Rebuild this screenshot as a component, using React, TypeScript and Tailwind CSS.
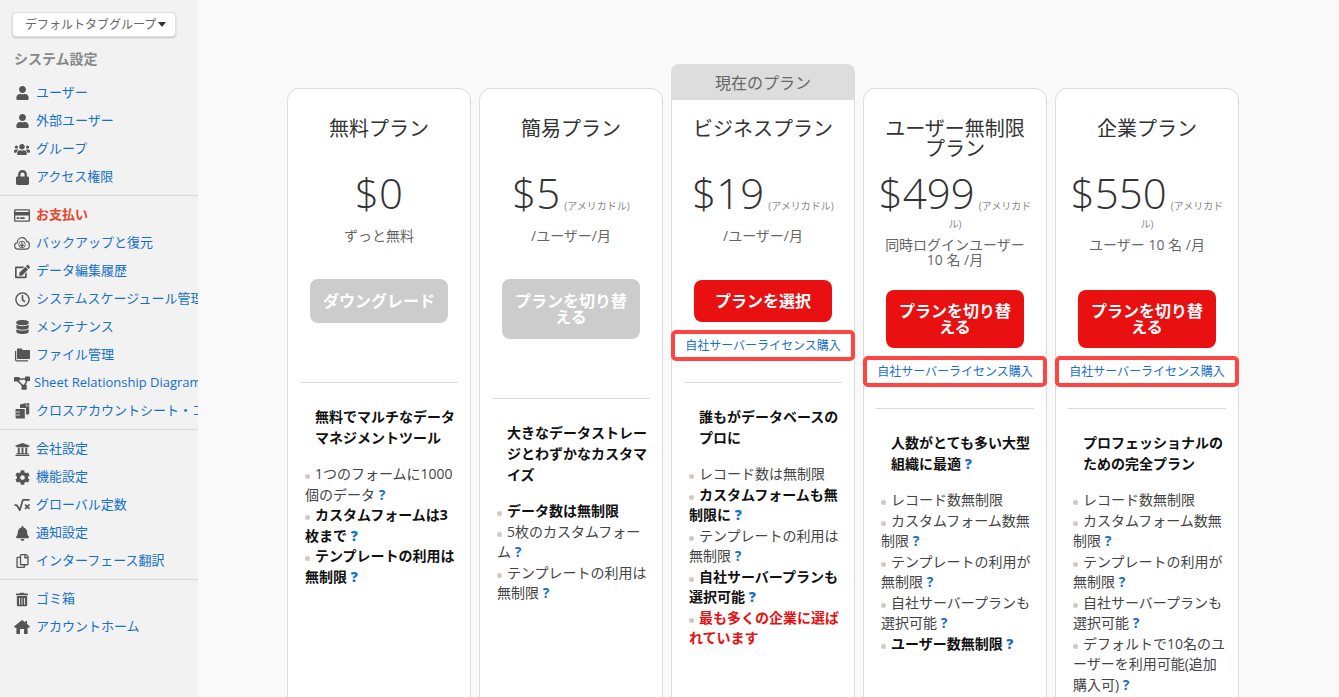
import React from "react";
import { FaUser, FaUsers, FaLock, FaRegCreditCard, FaRegClock, FaDatabase, FaUniversity, FaCog, FaBell, FaRegCopy, FaTrashAlt, FaEdit } from "react-icons/fa";
import { FaSquareRootVariable } from "react-icons/fa6";

const CloudIcon = () => (
  <svg viewBox="0 0 18 15" className="h-[15px] w-[18px]" fill="none" stroke="currentColor">
    <path d="M4.5 13.8 C2 13.8 0.7 12 0.7 10 C0.7 8.2 2 6.9 3.6 6.7 C3.8 3.4 6.2 0.9 9 0.9 C11.6 0.9 13.4 2.6 14 4.8 C15.9 5.2 17.3 7 17.3 9.2 C17.3 11.8 15.6 13.8 13.5 13.8 Z" strokeWidth="1.3" />
    <circle cx="9" cy="8.6" r="3.7" strokeWidth="1" />
    <path d="M9 6 V10.6 M7 8.8 L9 10.9 L11 8.8" strokeWidth="1.3" />
  </svg>
);
const FoldersIcon = () => (
  <svg viewBox="0 0 16 14" className="h-[14px] w-[16px]" fill="currentColor">
    <path d="M3 1.5 C3 .8 3.5 .5 4 .5 H7.5 L9 2 H15 C15.6 2 16 2.4 16 3 V10 C16 10.6 15.6 11 15 11 H4 C3.4 11 3 10.6 3 10 Z" />
    <path d="M1.6 3 V11.5 C1.6 12.3 2.2 12.8 3 12.8 H14" fill="none" stroke="currentColor" strokeWidth="1.3" />
  </svg>
);
const DiagramIcon = () => (
  <svg viewBox="0 0 16 14" className="h-[14px] w-[16px]" fill="currentColor">
    <rect x="0" y="1" width="5.5" height="4.5" rx=".6" />
    <rect x="11" y="0.5" width="5" height="4.5" rx=".6" />
    <rect x="7.5" y="8.8" width="5.2" height="5" rx=".6" />
    <path d="M5 3 H11 M4 5 L8.5 9.5 M13 4.5 L10.5 9.5" stroke="currentColor" strokeWidth="1.5" fill="none" />
  </svg>
);
const StackIcon = () => (
  <svg viewBox="0 0 15 16" className="h-[16px] w-[15px]" fill="currentColor">
    <path d="M5 1.6 L10 .2 L14.2 .2 V10.2 C14.2 11 13.6 11.6 12.8 11.6 H11 V5 L5 5 Z" />
    <path d="M11.2 .4 V3 H14" fill="none" stroke="#f2f2f2" strokeWidth=".7" />
    <path d="M.6 6 H9.8 V15.6 H2 C1.2 15.6 .6 15 .6 14.2 Z" />
    <path d="M1 9 H5 M1 12 H5" stroke="#f2f2f2" strokeWidth=".8" />
  </svg>
);
const HomeIcon = () => (
  <svg viewBox="0 0 16 14" className="h-[14px] w-[16px]" fill="currentColor">
    <path d="M8 0 L11.2 2.6 V1 H13 V4 L16 6.6 L15 7.8 H13.6 V14 H10 V9 H6 V14 H2.4 V7.8 H1 L0 6.6 Z" />
  </svg>
);

type Row = { icon: React.ReactNode; label: string; red?: boolean; tight?: boolean };
const ic = "w-[15px] h-[15px]";
const g1: Row[] = [
  { icon: <FaUser className="w-[13px] h-[14px]" />, label: "ユーザー" },
  { icon: <FaUser className="w-[13px] h-[14px]" />, label: "外部ユーザー" },
  { icon: <FaUsers className="w-[18px] h-[15px]" />, label: "グループ" },
  { icon: <FaLock className="w-[13px] h-[15px]" />, label: "アクセス権限" },
];
const g2: Row[] = [
  { icon: <FaRegCreditCard className="w-[16px] h-[15px]" />, label: "お支払い", red: true },
  { icon: <CloudIcon />, label: "バックアップと復元" },
  { icon: <FaEdit className={ic} />, label: "データ編集履歴" },
  { icon: <FaRegClock className={ic} />, label: "システムスケージュール管理" },
  { icon: <FaDatabase className="w-[13px] h-[14px]" />, label: "メンテナンス" },
  { icon: <FoldersIcon />, label: "ファイル管理" },
  { icon: <DiagramIcon />, label: "Sheet Relationship Diagram", tight: true },
  { icon: <StackIcon />, label: "クロスアカウントシート・コピー" },
];
const g3: Row[] = [
  { icon: <FaUniversity className={ic} />, label: "会社設定" },
  { icon: <FaCog className={ic} />, label: "機能設定" },
  { icon: <FaSquareRootVariable className="w-[16px] h-[14px]" />, label: "グローバル定数" },
  { icon: <FaBell className="w-[13px] h-[15px]" />, label: "通知設定" },
  { icon: <FaRegCopy className="w-[13px] h-[14px]" />, label: "インターフェース翻訳" },
];
const g4: Row[] = [
  { icon: <FaTrashAlt className="w-[12px] h-[15px]" />, label: "ゴミ箱" },
  { icon: <HomeIcon />, label: "アカウントホーム" },
];

function Rows({ rows }: { rows: Row[] }) {
  return (
    <>
      {rows.map((r) => (
        <div key={r.label} className="flex h-7 items-center whitespace-nowrap">
          <span className="flex w-[36px] shrink-0 justify-center pl-[14px] pr-[6px] text-[#555]">{r.icon}</span>
          <span className={`text-[13px] ${r.tight ? "-ml-[2px]" : ""} ${r.red ? "font-bold text-[#e8432d]" : "text-[#1570c8]"}`}>{r.label}</span>
        </div>
      ))}
    </>
  );
}

type Feat = { lines: string[]; kind?: "b" | "r"; q?: boolean };
type Plan = {
  name: string[];
  price: string;
  unit?: string;
  wrap?: string;
  sub: string[];
  btn: string[];
  active: boolean;
  license: boolean;
  current?: boolean;
  head: React.ReactNode;
  feats: Feat[];
};
const Q = () => <b className="text-[#1570c8]"> ?</b>;

const plans: Plan[] = [
  {
    name: ["無料プラン"], price: "$0", sub: ["ずっと無料"], btn: ["ダウングレード"], active: false, license: false,
    head: <>無料でマルチなデータ<br />マネジメントツール</>,
    feats: [
      { lines: ["1つのフォームに1000", "個のデータ"], q: true },
      { lines: ["カスタムフォームは3", "枚まで"], kind: "b", q: true },
      { lines: ["テンプレートの利用は", "無制限"], kind: "b", q: true },
    ],
  },
  {
    name: ["簡易プラン"], price: "$5", unit: "(アメリカドル)", sub: ["/ユーザー/月"], btn: ["プランを切り替", "える"], active: false, license: false,
    head: <>大きなデータストレー<br />ジとわずかなカスタマ<br />イズ</>,
    feats: [
      { lines: ["データ数は無制限"], kind: "b" },
      { lines: ["5枚のカスタムフォー", "ム"], q: true },
      { lines: ["テンプレートの利用は", "無制限"], q: true },
    ],
  },
  {
    name: ["ビジネスプラン"], price: "$19", unit: "(アメリカドル)", sub: ["/ユーザー/月"], btn: ["プランを選択"], active: true, license: true, current: true,
    head: <>誰もがデータベースの<br />プロに</>,
    feats: [
      { lines: ["レコード数は無制限"] },
      { lines: ["カスタムフォームも無", "制限に"], kind: "b", q: true },
      { lines: ["テンプレートの利用は", "無制限"], q: true },
      { lines: ["自社サーバープランも", "選択可能"], kind: "b", q: true },
      { lines: ["最も多くの企業に選ば", "れています"], kind: "r" },
    ],
  },
  {
    name: ["ユーザー無制限", "プラン"], price: "$499", unit: "(アメリカド", wrap: "ル)", sub: ["同時ログインユーザー", "10 名 /月"], btn: ["プランを切り替", "える"], active: true, license: true,
    head: <>人数がとても多い大型<br />組織に最適<Q /></>,
    feats: [
      { lines: ["レコード数無制限"] },
      { lines: ["カスタムフォーム数無", "制限"], q: true },
      { lines: ["テンプレートの利用が", "無制限"], q: true },
      { lines: ["自社サーバープランも", "選択可能"], q: true },
      { lines: ["ユーザー数無制限"], kind: "b", q: true },
    ],
  },
  {
    name: ["企業プラン"], price: "$550", unit: "(アメリカド", wrap: "ル)", sub: ["ユーザー 10 名 /月"], btn: ["プランを切り替", "える"], active: true, license: true,
    head: <>プロフェッショナルの<br />ための完全プラン</>,
    feats: [
      { lines: ["レコード数無制限"] },
      { lines: ["カスタムフォーム数無", "制限"], q: true },
      { lines: ["テンプレートの利用が", "無制限"], q: true },
      { lines: ["自社サーバープランも", "選択可能"], q: true },
      { lines: ["デフォルトで10名のユ", "ーザーを利用可能(追加", "購入可)"], q: true },
    ],
  },
];

function Card({ p }: { p: Plan }) {
  const btnMargin = p.wrap ? "mt-[23px]" : p.active ? "mt-[22px]" : "mt-[21px]";
  return (
    <div className="relative h-[640px] w-[184px] shrink-0 rounded-xl border border-[#dcdcdc] bg-white">
      {p.current && (
        <div className="absolute -left-px -top-[25px] flex h-[36px] w-[184px] items-center justify-center rounded-t-lg bg-[#dddddd] pt-[1px] text-[16px] text-[#666]">
          現在のプラン
        </div>
      )}
      <div className="flex h-[68px] flex-col items-center pt-[30px] text-[20px] leading-[20px] text-[#333]">
        {p.name.map((n) => <div key={n}>{n}</div>)}
      </div>
      <div className="mt-[12px] flex h-[50px] items-center justify-center whitespace-nowrap text-[#333]">
        <span className="mb-[3px] text-[42px] font-light">{p.price}</span>
        {p.unit && <span className="ml-[4px] mt-[24px] text-[10px] text-[#888]">{p.unit}</span>}
      </div>
      {p.wrap && <div className="h-[11px] text-center text-[10px] leading-[11px] text-[#888]">{p.wrap}</div>}
      <div className={`${p.wrap ? "mt-[7px]" : "mt-[9px]"} h-[30px] text-center text-[14px] leading-[15px] text-[#666]`}>
        {p.sub.map((s) => <div key={s}>{s}</div>)}
      </div>
      <div className={`${btnMargin} flex justify-center`}>
        <div className={`flex w-[138px] flex-col items-center justify-center rounded-lg text-[16px] font-bold leading-[16px] text-white ${p.active ? "bg-[#e81010] py-[13px]" : "bg-[#cccccc] py-[14px]"}`}>
          {p.btn.map((s) => <div key={s}>{s}</div>)}
        </div>
      </div>
      <div className={`mt-[8px] ${p.license ? "h-[31px]" : "h-[30px]"}`}>
        {p.license && (
          <div className="-mx-px flex h-[31px] items-center justify-center whitespace-nowrap rounded-[5px] border-4 border-[#ff4444] bg-white text-[12px] text-[#1570c8]">
            自社サーバーライセンス購入
          </div>
        )}
      </div>
      <div className="mx-[12px] mt-[21px] border-t border-[#d9d9d9]" />
      <div className="mt-[23px] whitespace-nowrap pl-[27px] text-[14px] font-bold leading-[21px] text-[#111]">{p.head}</div>
      <div className="mt-[16px] whitespace-nowrap pl-[17px] text-[14px] leading-[20.5px] text-[#444]">
        {p.feats.map((f, i) => (
          <div key={i} className={f.kind === "b" ? "font-bold text-[#111]" : f.kind === "r" ? "font-bold text-[#e81010]" : ""}>
            <span className="mr-[5px] inline-block h-[5px] w-[5px] rounded-full bg-[#cfcac4]" />
            {f.lines.map((l, j) => (
              <React.Fragment key={j}>
                {j > 0 && <br />}
                {l}
              </React.Fragment>
            ))}
            {f.q && <Q />}
          </div>
        ))}
      </div>
    </div>
  );
}

export default function App() {
  return (
    <div className="flex h-[697px] overflow-hidden bg-[#f9f9f9] font-['Open_Sans','Noto_Sans_CJK_JP',sans-serif]">
      <aside className="w-[198px] shrink-0 overflow-hidden bg-[#f2f2f2]">
        <div className="ml-[12px] mt-[12px] flex h-[25px] w-[164px] items-center gap-[2px] rounded border border-[#dedede] bg-white pl-[12px] text-[12px] text-[#666] shadow-[0_1px_2px_rgba(0,0,0,0.2)]">
          デフォルトタブグループ
          <span className="h-0 w-0 border-x-[4px] border-t-[5px] border-x-transparent border-t-[#333]" />
        </div>
        <div className="ml-[14px] mt-[12px] h-[30px] text-[14px] font-bold leading-[20px] text-[#888]">システム設定</div>
        <Rows rows={g1} />
        <div className="mb-[5px] mt-[4px] border-t border-[#d9d9d9]" />
        <Rows rows={g2} />
        <div className="mb-[5px] mt-[4px] border-t border-[#d9d9d9]" />
        <Rows rows={g3} />
        <div className="mb-[5px] mt-[4px] border-t border-[#d9d9d9]" />
        <Rows rows={g4} />
      </aside>
      <main className="flex flex-1 gap-[8px] pl-[89px] pt-[88px]">
        {plans.map((p) => <Card key={p.price} p={p} />)}
      </main>
    </div>
  );
}
